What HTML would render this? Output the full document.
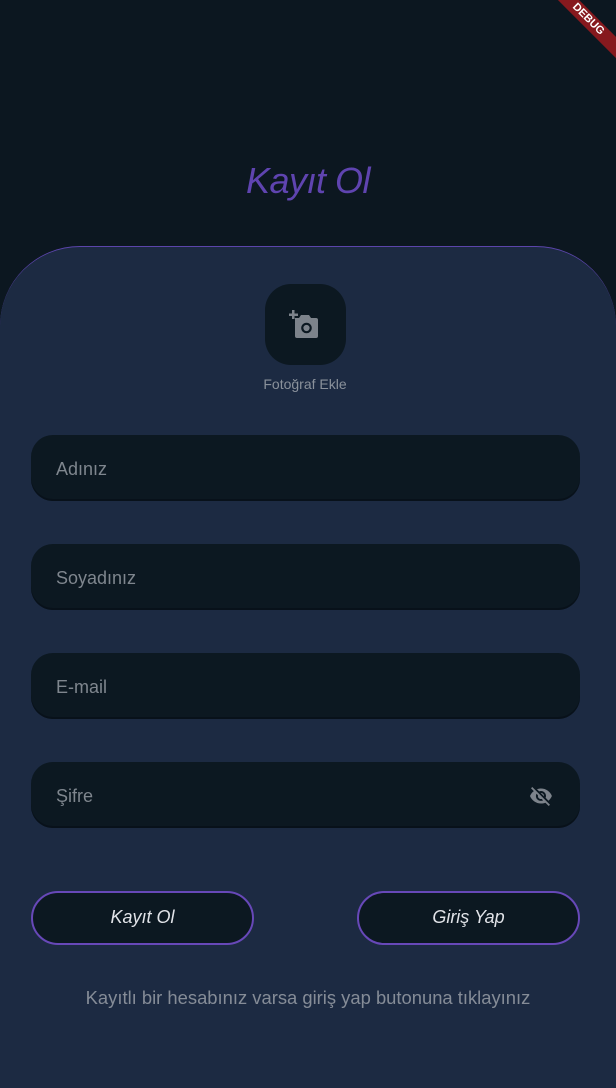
<!DOCTYPE html>
<html><head><meta charset="utf-8"><style>
*{margin:0;padding:0;box-sizing:border-box}
html,body{width:616px;height:1088px;overflow:hidden}
body{background:#0c1720;font-family:"Liberation Sans",sans-serif;position:relative}
.title{position:absolute;top:160px;left:0;width:616px;text-align:center;color:#5f44b0;font-size:36px;font-style:italic;letter-spacing:-0.5px}
.card{position:absolute;top:246px;left:0;width:616px;height:842px;background:#1c2a42;border-top:1.5px solid #5b45ab;border-radius:80px 80px 0 0}
.photo{position:absolute;top:284px;left:265px;width:81px;height:81px;border-radius:26px;background:#0c1821}
.plabel{position:absolute;top:376px;left:0;width:610px;text-align:center;color:#8a919b;font-size:14px}
.field{position:absolute;left:31px;width:549px;height:66px;border-radius:22px;background:#0c1821;box-shadow:inset 0 -2px 0 #08111a}
.field span{position:absolute;left:25px;top:24px;color:#7f868e;font-size:18px}
.btn{position:absolute;top:891px;width:223px;height:54px;border:2.5px solid #6748b8;border-radius:27px;background:#0c1821;color:#e1e3e8;font-size:18px;font-style:italic;text-align:center;line-height:49px}
.note{position:absolute;top:987px;left:0;width:616px;text-align:center;color:#858c97;font-size:18.4px}
.debug{position:absolute;top:12px;right:-32px;width:120px;height:15px;background:#86191e;transform:rotate(45deg);color:#fff;font-size:11px;font-weight:bold;text-align:center;line-height:15px}
</style></head><body>
<div class="debug">DEBUG</div>
<div class="title">Kayıt Ol</div>
<div class="card"></div>
<div class="photo">
<svg width="81" height="81" viewBox="0 0 81 81"><g fill="#7d838b"><rect x="27" y="26" width="2.5" height="9"/><rect x="24" y="29.5" width="9" height="2.5"/><path d="M30 34h4l2-3h8l2 3h5a2 2 0 0 1 2 2v16a2 2 0 0 1-2 2H32a2 2 0 0 1-2-2z"/></g><circle cx="41.5" cy="44" r="4.2" fill="none" stroke="#0c1821" stroke-width="2.2"/></svg>
</div>
<div class="plabel">Fotoğraf Ekle</div>
<div class="field" style="top:435px"><span>Adınız</span></div>
<div class="field" style="top:544px"><span>Soyadınız</span></div>
<div class="field" style="top:653px"><span>E-mail</span></div>
<div class="field" style="top:762px"><span>Şifre</span>
<svg style="position:absolute;left:498px;top:22px" width="24" height="24" viewBox="0 0 24 24"><path fill="#7d838b" d="M12 7c2.8 0 5 2.2 5 5 0 .6-.1 1.3-.4 1.8l2.9 2.9c1.5-1.3 2.7-2.9 3.4-4.7C21.3 7.6 17 4.5 12 4.5c-1.4 0-2.7.3-4 .7l2.2 2.2C10.7 7.1 11.3 7 12 7zM2 4.3l2.3 2.3.5.5C3.1 8.3 1.8 10 1 12c1.7 4.4 6 7.5 11 7.5 1.5 0 3-.3 4.4-.8l.4.4 2.9 2.9 1.3-1.3L3.3 3 2 4.3zm5.5 5.5 1.5 1.5c0 .2-.1.5-.1.7 0 1.7 1.3 3 3 3 .2 0 .4 0 .7-.1l1.5 1.5c-.7.3-1.4.5-2.2.5-2.8 0-5-2.2-5-5 .1-.8.3-1.5.6-2.1zm4.3-.8 3.2 3.2V12c0-1.7-1.3-3-3-3h-.2z"/></svg>
</div>
<div class="btn" style="left:31px">Kayıt Ol</div>
<div class="btn" style="left:357px">Giriş Yap</div>
<div class="note">Kayıtlı bir hesabınız varsa giriş yap butonuna tıklayınız</div>
</body></html>
